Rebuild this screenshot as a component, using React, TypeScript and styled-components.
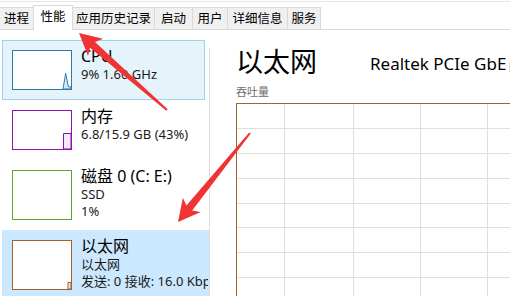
import React from "react";
import styled, { createGlobalStyle } from "styled-components";

const Global = createGlobalStyle`
  html, body { margin: 0; padding: 0; background: #fff; }
  body { width: 510px; height: 296px; overflow: hidden; }
`;

const FONT = `"Noto Sans", "Noto Sans CJK SC", sans-serif`;

const Page = styled.div`
  position: relative;
  width: 510px;
  height: 296px;
  overflow: hidden;
  background: #fff;
  font-family: ${FONT};
  color: #000;
`;

const TopRule = styled.div`
  height: 1px;
  margin-top: 1px;
  background: #e6e6e6;
`;

const TabBar = styled.div`
  display: flex;
  align-items: flex-end;
  height: 27px;
  border-bottom: 1px solid #d9d9d9;
  box-sizing: content-box;
`;

const Tab = styled.div<{ $w: number; $active?: boolean }>`
  box-sizing: border-box;
  width: ${(p) => p.$w + 1}px;
  height: ${(p) => (p.$active ? 25 : 22)}px;
  margin-left: -1px;
  margin-bottom: ${(p) => (p.$active ? -1 : 0)}px;
  padding-bottom: ${(p) => (p.$active ? 2 : 0)}px;
  display: flex;
  align-items: center;
  justify-content: center;
  font-size: 12.5px;
  line-height: 14px;
  background: ${(p) => (p.$active ? "#fff" : "#f0f0f0")};
  border: 1px solid #d9d9d9;
  border-bottom: none;
  position: relative;
  z-index: ${(p) => (p.$active ? 1 : 0)};
  white-space: nowrap;
`;

const Body = styled.div`
  display: flex;
  height: 266px;
`;

const Sidebar = styled.div`
  width: 209px;
  padding-top: 10px;
  box-sizing: border-box;
  display: flex;
  flex-direction: column;
  overflow: hidden;
`;

type ItemState = "none" | "hover" | "selected";

const Item = styled.div<{ $state: ItemState; $h: number }>`
  box-sizing: border-box;
  margin-left: 2px;
  width: ${(p) => (p.$state === "selected" ? 207 : 203)}px;
  height: ${(p) => p.$h}px;
  flex: none;
  display: flex;
  align-items: flex-start;
  overflow: hidden;
  border: 1px solid
    ${(p) => (p.$state === "hover" ? "#9fd3e8" : "transparent")};
  background: ${(p) =>
    p.$state === "hover" ? "#e5f3fb" : p.$state === "selected" ? "#cce8ff" : "transparent"};
`;

const Thumb = styled.div<{ $color: string; $h: number }>`
  box-sizing: border-box;
  flex: none;
  width: 60px;
  height: ${(p) => p.$h}px;
  margin: 9px 0 0 9px;
  border: 1px solid ${(p) => p.$color};
  background: #fff;
  display: flex;
  svg { display: block; }
`;

const TextCol = styled.div`
  margin-left: 9px;
  padding-top: 6px;
  display: flex;
  flex-direction: column;
  white-space: nowrap;
`;

const Title = styled.div`
  font-size: 16px;
  line-height: 19px;
  color: #000;
`;

const Sub = styled.div`
  font-size: 13px;
  line-height: 17px;
  color: #1a1a1a;
`;

const Divider = styled.div`
  width: 1px;
  margin-top: 18px;
  background: #dcdcdc;
  flex: none;
`;

const Main = styled.div`
  flex: 1;
  min-width: 0;
  padding: 16px 0 0 26px;
  display: flex;
  flex-direction: column;
  overflow: hidden;
`;

const Heading = styled.div`
  white-space: nowrap;
  height: 32px;
  line-height: 32px;
`;

const BigTitle = styled.span`
  font-size: 27px;
  color: #000;
`;

const Device = styled.span`
  font-size: 17px;
  margin-left: 53px;
  vertical-align: 2px;
  color: #000;
`;

const DeviceMark = styled.span`
  display: inline-block;
  width: 2px;
  height: 10px;
  margin-left: 3px;
  background: #f3d6a4;
  vertical-align: 0px;
`;

const Label = styled.div`
  margin-top: 7px;
  font-size: 11px;
  line-height: 14px;
  color: #6d6d6d;
`;

const Graph = styled.div`
  margin-top: 4px;
  width: 300px;
  flex: 1;
  border-left: 1px solid #a5622a;
  border-top: 1px solid #a5622a;
  svg { display: block; }
`;

const Overlay = styled.svg`
  position: absolute;
  left: 0;
  top: 0;
  pointer-events: none;
`;

function arrowPoints(
  tip: [number, number],
  tail: [number, number],
  headLen: number,
  headW: number,
  neckW: number,
  tailW: number
) {
  const dx = tip[0] - tail[0];
  const dy = tip[1] - tail[1];
  const len = Math.hypot(dx, dy);
  const ux = dx / len;
  const uy = dy / len;
  const nx = -uy;
  const ny = ux;
  const bx = tip[0] - ux * headLen;
  const by = tip[1] - uy * headLen;
  const bx2 = tip[0] - ux * (headLen - 4);
  const by2 = tip[1] - uy * (headLen - 4);
  const pts: [number, number][] = [
    [tail[0] + (nx * tailW) / 2, tail[1] + (ny * tailW) / 2],
    [bx2 + (nx * neckW) / 2, by2 + (ny * neckW) / 2],
    [bx + (nx * headW) / 2, by + (ny * headW) / 2],
    tip,
    [bx - (nx * headW) / 2, by - (ny * headW) / 2],
    [bx2 - (nx * neckW) / 2, by2 - (ny * neckW) / 2],
    [tail[0] - (nx * tailW) / 2, tail[1] - (ny * tailW) / 2],
  ];
  return pts.map((p) => `${p[0].toFixed(1)},${p[1].toFixed(1)}`).join(" ");
}

const tabs: { label: string; w: number; active?: boolean }[] = [
  { label: "进程", w: 34 },
  { label: "性能", w: 39, active: true },
  { label: "应用历史记录", w: 82 },
  { label: "启动", w: 38 },
  { label: "用户", w: 35 },
  { label: "详细信息", w: 60 },
  { label: "服务", w: 33 },
];

const gridX = [47.5, 116.5, 183.5, 250.5];
const gridY = Array.from({ length: 8 }, (_, i) => Math.round(24 + i * 24.85) + 0.5);

export default function App() {
  return (
    <Page>
      <Global />
      <TopRule />
      <TabBar>
        {tabs.map((t) => (
          <Tab key={t.label} $w={t.w} $active={t.active}>
            {t.label}
          </Tab>
        ))}
      </TabBar>
      <Body>
        <Sidebar>
          <Item $state="hover" $h={60}>
            <Thumb $color="#2c7ba2" $h={40}>
              <svg width="58" height="38">
                <polygon
                  points="50,38 52.7,22.3 55.3,35.7 58,36 58,38"
                  fill="#d8ebf6"
                  stroke="#2c7ba2"
                  strokeWidth="1"
                />
              </svg>
            </Thumb>
            <TextCol>
              <Title>CPU</Title>
              <Sub>9% 1.60 GHz</Sub>
            </TextCol>
          </Item>
          <Item $state="none" $h={60}>
            <Thumb $color="#8b12ae" $h={40}>
              <svg width="58" height="38">
                <polygon
                  points="50.5,38 50.5,22.5 58,22.5 58,38"
                  fill="#f3e8f7"
                  stroke="#8b12ae"
                  strokeWidth="1"
                />
              </svg>
            </Thumb>
            <TextCol>
              <Title>内存</Title>
              <Sub>6.8/15.9 GB (43%)</Sub>
            </TextCol>
          </Item>
          <Item $state="none" $h={70}>
            <Thumb $color="#5ea32a" $h={50} />
            <TextCol>
              <Title>磁盘 0 (C: E:)</Title>
              <Sub>SSD</Sub>
              <Sub>1%</Sub>
            </TextCol>
          </Item>
          <Item $state="selected" $h={70}>
            <Thumb $color="#a5622a" $h={50}>
              <svg width="58" height="48">
                <polygon
                  points="55,48 55,41.5 58,41.5 58,48"
                  fill="#f4e3d0"
                  stroke="#a5622a"
                  strokeWidth="1"
                />
              </svg>
            </Thumb>
            <TextCol>
              <Title>以太网</Title>
              <Sub>以太网</Sub>
              <Sub>发送: 0 接收: 16.0 Kbps</Sub>
            </TextCol>
          </Item>
        </Sidebar>
        <Divider />
        <Main>
          <Heading>
            <BigTitle>以太网</BigTitle>
            <Device>Realtek PCIe GbE</Device>
            <DeviceMark />
          </Heading>
          <Label>吞吐量</Label>
          <Graph>
            <svg width="299" height="200">
              {gridX.map((x) => (
                <line key={"x" + x} x1={x} y1={0} x2={x} y2={200} stroke="#e8ddd2" strokeWidth="1" />
              ))}
              {gridY.map((y) => (
                <line key={"y" + y} x1={0} y1={y} x2={299} y2={y} stroke="#e8ddd2" strokeWidth="1" />
              ))}
            </svg>
          </Graph>
        </Main>
      </Body>
      <Overlay width="510" height="296" viewBox="0 0 510 296">
        <polygon points={arrowPoints([79, 33], [167, 110], 22, 23, 7.5, 2)} fill="#f03434" />
        <polygon points={arrowPoints([178, 222], [250, 133], 22, 23, 7.5, 2)} fill="#f03434" />
      </Overlay>
    </Page>
  );
}
